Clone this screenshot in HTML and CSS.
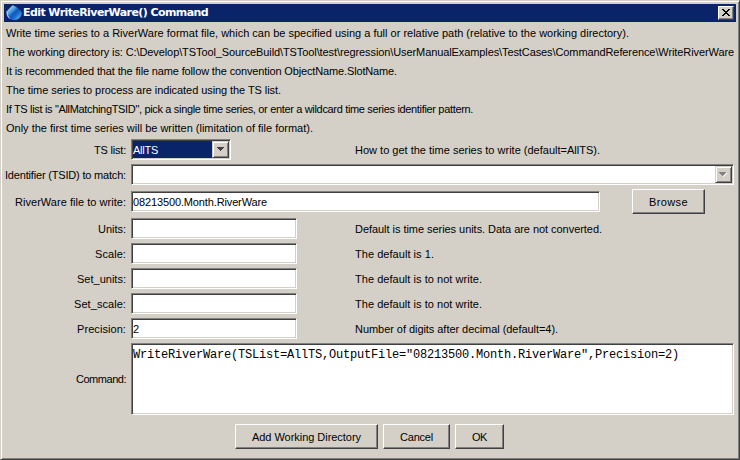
FILE: index.html
```html
<!DOCTYPE html>
<html lang="en">
<head>
<meta charset="utf-8">
<title>Edit WriteRiverWare() Command</title>
<link rel="stylesheet" href="styles.css">
</head>
<body>
<div class="window">
  <header class="titlebar">
    <svg class="app-icon" width="17" height="16" viewBox="0 0 17 16">
      <defs><linearGradient id="drop" x1="0.1" y1="0.1" x2="0.9" y2="0.9"><stop offset="0" stop-color="#b4d4ee"/><stop offset="0.3" stop-color="#48a4ec"/><stop offset="0.5" stop-color="#1458b8"/><stop offset="0.68" stop-color="#1468cc"/><stop offset="1" stop-color="#5cb4f4"/></linearGradient></defs>
      <path d="M7 0.500 L0.800 7 Q0.500 11 3.500 13.500 Q8 16.500 13 13.500 Q16.500 10 15.500 7 Q12 2 7 0.500Z" fill="url(#drop)"/>
      <path d="M7 0.500 L1 6.500 Q0.500 11 3.500 13.500" fill="none" stroke="#c8dcec"/>
    </svg>
    <h1 class="title"><span data-width="185">Edit WriteRiverWare() Command</span></h1>
    <button class="close" aria-label="Close"><svg width="8" height="7" viewBox="0 0 8 7" shape-rendering="crispEdges"><path d="M0 0h2v1h1v1h2v-1h1v-1h2v1h-1v1h-1v1h-1v1h1v1h1v1h1v1h-2v-1h-1v-1h-2v1h-1v1h-2v-1h1v-1h1v-1h1v-1h-1v-1h-1v-1h-1z"/></svg></button>
  </header>
  <main>
    <div class="info">
      <p><span data-width="623">Write time series to a RiverWare format file, which can be specified using a full or relative path (relative to the working directory).</span></p>
      <p><span data-width="728">The working directory is: C:\Develop\TSTool_SourceBuild\TSTool\test\regression\UserManualExamples\TestCases\CommandReference\WriteRiverWare</span></p>
      <p><span data-width="391">It is recommended that the file name follow the convention ObjectName.SlotName.</span></p>
      <p><span data-width="275">The time series to process are indicated using the TS list.</span></p>
      <p><span data-width="467">If TS list is "AllMatchingTSID", pick a single time series, or enter a wildcard time series identifier pattern.</span></p>
      <p><span data-width="307">Only the first time series will be written (limitation of file format).</span></p>
    </div>
    <div class="row row-list">
      <label><span data-width="32">TS list:</span></label>
      <div class="field combo short"><div class="value selected"><span data-width="25">AllTS</span></div><div class="arrow"><svg width="7" height="4" viewBox="0 0 7 4" shape-rendering="crispEdges"><path d="M0 0h7v1h-1v1h-1v1h-1v1h-1v-1h-1v-1h-1v-1h-1z" fill="#404040"/></svg></div></div>
      <p class="help"><span data-width="245">How to get the time series to write (default=AllTS).</span></p>
    </div>
    <div class="row">
      <label><span data-width="121">Identifier (TSID) to match:</span></label>
      <div class="field combo wide"><div class="value"></div><div class="arrow"><svg width="8" height="5" viewBox="0 0 8 5" shape-rendering="crispEdges"><path d="M7 1h1v1h-1v1h-1v1h-1v1h-1v-1h1v-1h1v-1h1z" fill="#fff"/><path d="M0 0h7v1h-1v1h-1v1h-1v1h-1v-1h-1v-1h-1v-1h-1z" fill="#808080"/></svg></div></div>
    </div>
    <div class="row row-file">
      <label><span data-width="111">RiverWare file to write:</span></label>
      <div class="field file"><span data-width="134">08213500.Month.RiverWare</span></div>
      <button class="btn browse"><span data-width="39">Browse</span></button>
    </div>
    <div class="row">
      <label><span data-width="28">Units:</span></label>
      <div class="field text"></div>
      <p class="help"><span data-width="247">Default is time series units. Data are not converted.</span></p>
    </div>
    <div class="row">
      <label><span data-width="31">Scale:</span></label>
      <div class="field text"></div>
      <p class="help"><span data-width="79">The default is 1.</span></p>
    </div>
    <div class="row">
      <label><span data-width="49">Set_units:</span></label>
      <div class="field text"></div>
      <p class="help"><span data-width="127">The default is to not write.</span></p>
    </div>
    <div class="row">
      <label><span data-width="52">Set_scale:</span></label>
      <div class="field text"></div>
      <p class="help"><span data-width="127">The default is to not write.</span></p>
    </div>
    <div class="row">
      <label><span data-width="49">Precision:</span></label>
      <div class="field text"><span>2</span></div>
      <p class="help"><span data-width="203">Number of digits after decimal (default=4).</span></p>
    </div>
    <div class="row row-command">
      <label><span data-width="50">Command:</span></label>
      <div class="field wide command"><span data-width="546">WriteRiverWare(TSList=AllTS,OutputFile="08213500.Month.RiverWare",Precision=2)</span></div>
    </div>
    <footer class="actions">
      <button class="btn add"><span data-width="109">Add Working Directory</span></button>
      <button class="btn cancel"><span data-width="33">Cancel</span></button>
      <button class="btn ok"><span data-width="15">OK</span></button>
    </footer>
  </main>
</div>
<script src="fit.js"></script>
</body>
</html>
```
FILE: styles.css
```css
* { box-sizing: border-box; margin: 0; }

body {
  width: 740px;
  height: 460px;
  overflow: hidden;
  background: #d4d0c8;
  color: #000;
  font: 11px/15px "Liberation Sans", Arial, sans-serif;
}

span { white-space: pre; }

.window {
  height: 460px;
  padding: 2px;
  border: 1px solid;
  border-color: #d4d0c8 #404040 #404040 #d4d0c8;
  box-shadow: inset 1px 1px #fff, inset -1px -1px #808080;
}

.titlebar {
  display: flex;
  align-items: center;
  height: 18px;
  margin: 1px 1px 0;
  padding: 0 2px;
  background: #0a246a;
  color: #fff;
}

.app-icon { flex: none; }

.title {
  flex: 1;
  font: bold 11px/18px "DejaVu Sans", Tahoma, sans-serif;
}

.close {
  display: flex;
  align-items: center;
  justify-content: center;
  width: 16px;
  height: 14px;
  padding: 0 1px 1px 0;
  background: #d4d0c8;
  border: 1px solid;
  border-color: #fff #404040 #404040 #fff;
  box-shadow: inset -1px -1px #808080;
}

main { padding-top: 2px; }

.info { padding-left: 3px; }
.info p { height: 19px; line-height: 19px; }

.row {
  display: flex;
  align-items: center;
  height: 25px;
  padding-left: 3px;
}

.row-list { height: 23px; margin-bottom: 1px; }
.row-file { height: 29px; }
.row-command { height: 76px; }

label {
  flex: none;
  width: 120px;
  margin-right: 5px;
  padding-top: 1px;
  display: flex;
  justify-content: flex-end;
}

.help { padding-top: 1px; }

.field {
  flex: none;
  height: 21px;
  padding: 1px;
  background: #fff;
  border: 1px solid;
  border-color: #808080 #fff #fff #808080;
  box-shadow: inset 1px 1px #404040, inset -1px -1px #d4d0c8;
  line-height: 18px;
}

.combo { display: flex; }
.short { width: 100px; margin-right: 124px; }
.wide { width: 603px; }
.file { width: 469px; margin-right: 32px; }
.text { width: 166px; margin-right: 58px; }

.value { flex: 1; }
.selected { background: #0a246a; color: #fff; }

.arrow {
  display: flex;
  align-items: center;
  justify-content: center;
  width: 17px;
  padding: 0 1px 1px 0;
  background: #d4d0c8;
  border: 1px solid;
  border-color: #d4d0c8 #404040 #404040 #d4d0c8;
  box-shadow: inset 1px 1px #fff, inset -1px -1px #808080;
}

.command {
  height: 72px;
  padding-top: 2px;
  font: 12px/19px "Liberation Mono", "Courier New", monospace;
}

.btn {
  display: flex;
  align-items: center;
  justify-content: center;
  height: 25px;
  padding: 1px 0 0;
  background: #d4d0c8;
  color: #000;
  border: 1px solid;
  border-color: #fff #404040 #404040 #fff;
  box-shadow: inset -1px -1px #808080;
  font: inherit;
}

.browse { width: 73px; }
.add { width: 143px; }
.cancel { width: 67px; }
.ok { width: 49px; }

.actions {
  display: flex;
  align-items: center;
  gap: 5px;
  height: 39px;
  padding-left: 232px;
}
```
FILE: fit.js
```js
document.querySelectorAll("[data-width]").forEach((el) => {
  const natural = el.getBoundingClientRect().width;
  const extra = Number(el.dataset.width) - natural;
  el.style.letterSpacing = extra / el.textContent.length + "px";
});
```
